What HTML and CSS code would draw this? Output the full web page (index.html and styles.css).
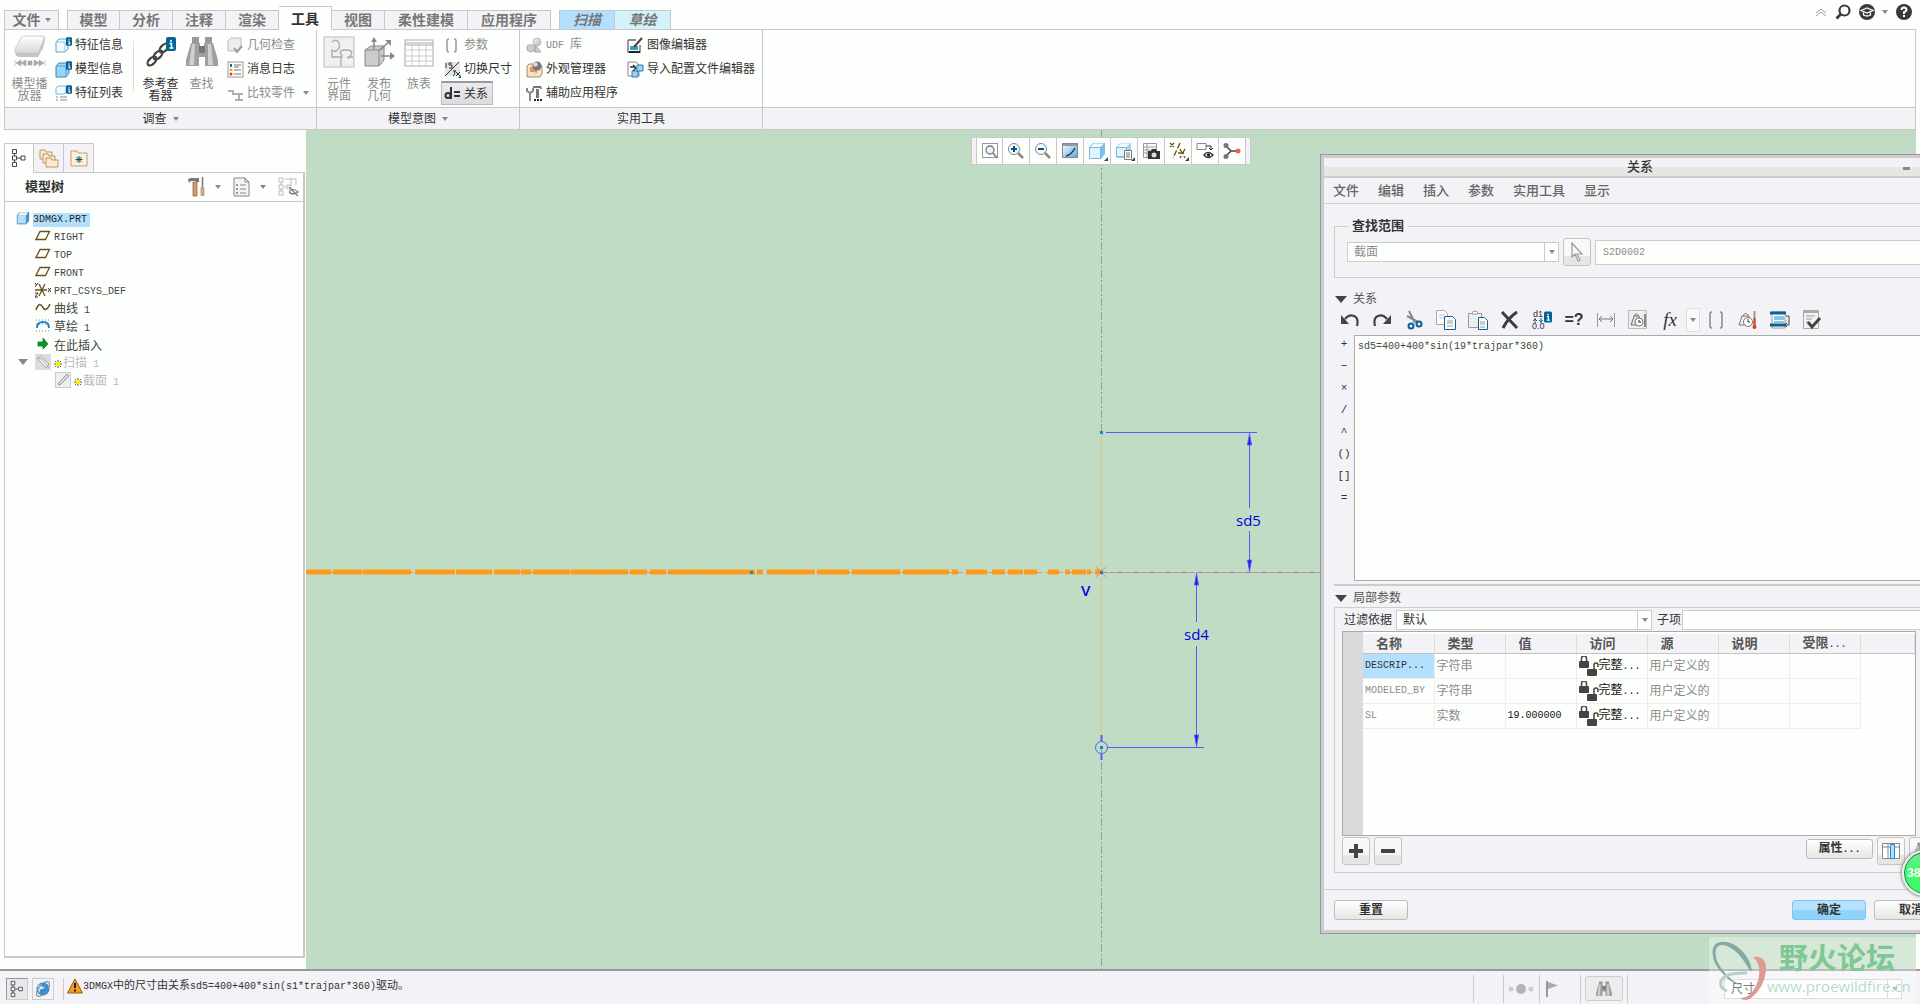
FILE: index.html
```
<!DOCTYPE html>
<html lang="zh-CN">
<head>
  <meta charset="UTF-8">
  <title>3DMGX - 关系</title>
  <link rel="stylesheet" href="styles.css">
</head>
<body>

  <!-- shared icons -->
  <svg class="defs" width="0" height="0" aria-hidden="true">
    <defs>
      <linearGradient id="gGrey" x1="0" y1="0" x2="1" y2="1"><stop offset="0" stop-color="#f8f8f8"/><stop offset="1" stop-color="#b4b4b4"/></linearGradient>
      <linearGradient id="gSlab" x1="0" y1="0" x2="0" y2="1"><stop offset="0" stop-color="#fff"/><stop offset="1" stop-color="#d8d8d8"/></linearGradient>
      <linearGradient id="gBlue" x1="0" y1="0" x2="1" y2="1"><stop offset="0" stop-color="#fff"/><stop offset="1" stop-color="#5aa5dc"/></linearGradient>
      <symbol id="info" viewBox="0 0 10 14"><rect width="10" height="14" rx="2" fill="#05629a"/><path d="M5 3v2M3.5 6.500H5.500V11M3.500 11h4" stroke="#fff" stroke-width="1.600" fill="none"/></symbol>
      <symbol id="lock" viewBox="0 0 20 20">
        <rect x="0" y="5" width="10" height="7" rx="1" fill="#444"/><path d="M2.500 5V2.500a2.500 2.500 0 0 1 5 0V5" fill="none" stroke="#444" stroke-width="1.500"/>
        <rect x="8" y="13" width="10" height="7" rx="1" fill="#444"/><path d="M15 13V9a2 2 0 0 1 4 0v2" fill="none" stroke="#444" stroke-width="1.500"/>
      </symbol>
      <symbol id="star" viewBox="0 0 8 8"><path d="M4 0v8M0 4h8M1 1l6 6M7 1L1 7" stroke="#555" stroke-width="1"/><rect x="2" y="2" width="4" height="4" fill="#fff200"/></symbol>
      <symbol id="plane" viewBox="0 0 16 12"><path d="M5 1.500h9.500L10.500 9.500H1z" fill="#fff" stroke="#6b4f1d" stroke-width="1.300"/></symbol>
      <symbol id="nodes" viewBox="0 0 16 20"><path d="M3.500 5v10M6 10h4" stroke="#444"/><path d="M1.500 1.500h4v4h-4zM1.500 8h4v4h-4zM1.500 14.500h4v4h-4zM10 8h4v4h-4z" fill="#fff" stroke="#444"/></symbol>
      <symbol id="binoc" viewBox="0 0 32 32">
        <path d="M6 1h7v6H6zM19 1h7v6h-7z" fill="#999"/><path d="M5 7h9v4h4V7h9l5 17v6H19v-9h-6v9H0v-6z" fill="#a0a0a0"/>
        <path d="M6 8h3l-1 21H3zM22 8h3l2 21h-5z" fill="#d0d0d0"/><rect x="13" y="10" width="6" height="7" fill="#777"/>
      </symbol>
      <symbol id="part" viewBox="0 0 16 16"><path d="M1 5l3-4h11v10l-3 4H1z" fill="#3c8fc6"/><path d="M1.500 5h10v9.500h-10z" fill="#b5dffb" stroke="#6ea9d0"/><path d="M2 5l2.500-3.500H14L11.500 5z" fill="#e8f6ff"/></symbol>
    </defs>
  </svg>

  <header class="ribbon">
    <div class="tab-row">
      <button class="tab file">文件<span class="caret"></span></button>
      <nav class="tabs">
        <button class="tab">模型</button>
        <button class="tab">分析</button>
        <button class="tab">注释</button>
        <button class="tab">渲染</button>
        <button class="tab active">工具</button>
        <button class="tab">视图</button>
        <button class="tab wide">柔性建模</button>
        <button class="tab wide">应用程序</button>
      </nav>
      <nav class="tabs context">
        <button class="tab sweep">扫描</button>
        <button class="tab sketch">草绘</button>
      </nav>
      <div class="top-icons">
        <button aria-label="最小化功能区"><svg width="12" height="10" viewBox="0 0 12 10"><path d="M1 6l5-4 5 4M1 9l5-4 5 4" fill="none" stroke="#999"/></svg></button>
        <button aria-label="搜索"><svg width="16" height="16" viewBox="0 0 16 16"><circle cx="9.500" cy="6.500" r="5" fill="none" stroke="#3a3a3a" stroke-width="2.200"/><path d="M6 10L1.500 14.500" stroke="#3a3a3a" stroke-width="2.800"/></svg></button>
        <button aria-label="学习"><svg width="16" height="16" viewBox="0 0 16 16"><circle cx="8" cy="8" r="8" fill="#3a3a3a"/><path d="M2 6.500L8 4l6 2.500L8 9zM4.500 8.500v2.500q3.500 2 7 0V8.500" fill="none" stroke="#fff" stroke-width="1.300"/></svg><span class="caret"></span></button>
        <button aria-label="帮助"><svg width="16" height="16" viewBox="0 0 16 16"><circle cx="8" cy="8" r="8" fill="#3a3a3a"/><path d="M5.500 6q0-2.500 2.500-2.500T10.500 6Q10.500 7.200 8 8.200V10" fill="none" stroke="#fff" stroke-width="2"/><rect x="7" y="11" width="2" height="2" fill="#fff"/></svg></button>
      </div>
    </div>

    <div class="groups">
      <section class="group g-study">
        <div class="group-body">
          <button class="big off">
            <svg width="32" height="34" viewBox="0 0 32 34"><path d="M1 17L8 3q1-2 3-2h17q4 0 3 4l-2 8-5 9H5q-4-1-4-5z" fill="#c4c4c4"/><path d="M1 14L7 3q1-2 3-2h18q3 0 2 3l-5 12q-1 2-3 2H3q-3-1-2-4z" fill="url(#gSlab)" stroke="#ccc"/><path d="M1 25v6M7 25l-5 3 5 3zM12 25l-5 3 5 3zM14 26h4v4h-4zM20 25l5 3-5 3zM25 25l5 3-5 3zM31 25v6" fill="#aaa" stroke="#aaa" stroke-width=".6"/></svg>
            模型播<br>放器
          </button>
          <div class="stack">
            <button><svg width="17" height="17" viewBox="0 0 17 17"><path d="M1 5l3-3h9v10l-3 3H1z" fill="#f4fbff" stroke="#5ca4cf"/><path d="M1 5h9v10" fill="none" stroke="#8cc4e6"/><use href="#info" x="11" y="0" width="6" height="9"/></svg>特征信息</button>
            <button><svg width="17" height="17" viewBox="0 0 17 17"><path d="M1 5l3-3h10v10l-3 4H1z" fill="#9ad4f7" stroke="#3c86b5"/><path d="M1 5h10v11" fill="none" stroke="#5ca4cf"/><use href="#info" x="11" y="0" width="6" height="9"/></svg>模型信息</button>
            <button><svg width="17" height="17" viewBox="0 0 17 17"><path d="M1 3l2-2h8v6l-2 2H1z" fill="#f4fbff" stroke="#7ab8de"/><path d="M1 12h2M5 12h7M1 15h2M5 15h7" stroke="#888"/><use href="#info" x="11" y="0" width="6" height="9"/></svg>特征列表</button>
          </div>
          <span class="divider"></span>
          <button class="big">
            <svg width="32" height="34" viewBox="0 0 32 34"><g fill="none" stroke="#444" stroke-width="2.200"><ellipse cx="7" cy="26" rx="5.500" ry="3" transform="rotate(-45 7 26)"/><ellipse cx="13" cy="20" rx="5.500" ry="3" transform="rotate(-45 13 20)"/><ellipse cx="19" cy="13" rx="5.500" ry="3" transform="rotate(-45 19 13)"/></g><use href="#info" x="21" y="2" width="10" height="14"/></svg>
            参考查<br>看器
          </button>
          <button class="big off">
            <svg width="32" height="34" viewBox="0 0 32 34"><use href="#binoc" y="1" width="32" height="32"/></svg>
            查找
          </button>
          <div class="stack">
            <button class="off"><svg width="17" height="17" viewBox="0 0 17 17"><path d="M1 4l3-3h10v9l-3 4H1z" fill="#eee" stroke="#bbb"/><path d="M7 11l3 4 5-6" fill="none" stroke="#999" stroke-width="2"/></svg>几何检查</button>
            <button><svg width="17" height="17" viewBox="0 0 17 17"><rect x="1" y="1" width="15" height="15" fill="#fff" stroke="#999"/><path d="M7 4h7M7 6h5M7 9h7M7 13h7" stroke="#777"/><rect x="3" y="3" width="2" height="3" fill="#246ba8"/><path d="M2 10l2-3 2 3z" fill="#e8a400"/><circle cx="4" cy="13" r="1.500" fill="#d33"/></svg>消息日志</button>
            <button class="off"><svg width="17" height="17" viewBox="0 0 17 17"><path d="M1 6h5v3h4M7 9h9M12 9v5M8 15h8" fill="none" stroke="#b0b0b0" stroke-width="2"/></svg>比较零件<span class="caret"></span></button>
          </div>
        </div>
        <footer class="group-label">调查<span class="caret"></span></footer>
      </section>

      <section class="group g-intent">
        <div class="group-body">
          <button class="big off">
            <svg width="32" height="34" viewBox="0 0 32 34"><rect x="1" y="2" width="30" height="30" fill="#f0f0f2" stroke="#bbb"/><path d="M9 7q5-4 7 1t-3 8q-4 1-4-2M9 14v8h8q4 1 1-3t5-4 5 5-3 2h5M18 22v9" fill="none" stroke="#aaa" stroke-width="1.300"/></svg>
            元件<br>界面
          </button>
          <button class="big off">
            <svg width="32" height="34" viewBox="0 0 32 34"><path d="M2 15l6-4h13v14l-5 6H2z" fill="#ccc" stroke="#888"/><path d="M2 15h14v16M16 15l5-4" fill="none" stroke="#888"/><path d="M11 14V4M17 15L27 6M18 21h11" stroke="#888" stroke-width="1.500"/><path d="M8 7l3-5 3 5zM22 5h6v6zM27 17l5 4-5 4z" fill="#888"/></svg>
            发布<br>几何
          </button>
          <button class="big off">
            <svg width="32" height="34" viewBox="0 0 32 34"><rect x="2" y="5" width="28" height="26" fill="#fff" stroke="#aaa"/><path d="M2 10h28M2 8h28" stroke="#aaa"/><path d="M2 15h28M2 21h28M2 26h28M9 8v23M16 8v23M23 8v23" stroke="#ccc"/></svg>
            族表
          </button>
          <div class="stack">
            <button class="off"><svg width="17" height="17" viewBox="0 0 17 17"><path d="M5 2Q3 2 3 4v9q0 2 2 2M10 2q2 0 2 2v9q0 2-2 2" fill="none" stroke="#999" stroke-width="1.500"/></svg>参数</button>
            <button><svg width="17" height="17" viewBox="0 0 17 17"><rect x="1" y="1" width="15" height="14" fill="#e4e4e4"/><path d="M2 2v5M8 2H5v2h3v3H5M1 15L15 1M9 15q2 0 2-6M9 10h3M12 11l4 4M16 11l-4 4" stroke="#333" fill="none"/><path d="M17 14v3h-3z" fill="#05629a"/></svg>切换尺寸</button>
            <button class="pressed"><svg width="17" height="17" viewBox="0 0 17 17"><path d="M7 2v12M10 7h6M10 11h6" stroke="#333" stroke-width="2"/><circle cx="4" cy="10.500" r="2.500" fill="none" stroke="#333" stroke-width="2"/></svg>关系</button>
          </div>
        </div>
        <footer class="group-label">模型意图<span class="caret"></span></footer>
      </section>

      <section class="group g-utils">
        <div class="group-body">
          <div class="stack">
            <button class="off"><svg width="17" height="17" viewBox="0 0 17 17"><circle cx="11" cy="5" r="4" fill="url(#gGrey)" stroke="#bbb"/><path d="M1 10q0-2 2-2h6v5l-5 2-3-2zM10 9l5 6H8z" fill="#ccc" stroke="#aaa"/></svg><span><span class="mono">UDF </span>库</span></button>
            <button><svg width="17" height="17" viewBox="0 0 17 17"><path d="M1 5l2-2h4l1 2h8v8l-2 3H1z" fill="#f3e3c8" stroke="#a87"/><path d="M4 6h7v6l-3-1H4z" fill="#ee8f5f"/><circle cx="11" cy="5" r="4.500" fill="#777"/><circle cx="9.500" cy="3.500" r="2.200" fill="#ddd"/></svg>外观管理器</button>
            <button><svg width="17" height="17" viewBox="0 0 17 17"><path d="M1 3v3l3 2 3-2V3M4 8v8" fill="none" stroke="#888" stroke-width="2"/><path d="M7 1h8l1 3h-2V3H7zM10 4h3v9h-3z" fill="#777"/><path d="M8 15h2M11 15h2M14 15h2" stroke="#222" stroke-width="2"/></svg>辅助应用程序</button>
          </div>
          <div class="stack">
            <button><svg width="17" height="17" viewBox="0 0 17 17"><path d="M1 3h8M1 3v12h12V8" fill="#fff" stroke="#666" stroke-width="1.300"/><path d="M3 9h8v4H3z" fill="#37a0c4"/><path d="M15 1L7 10" stroke="#444" stroke-width="2"/><path d="M2 15h11" stroke="#222" stroke-width="2"/></svg>图像编辑器</button>
            <button><svg width="17" height="17" viewBox="0 0 17 17"><path d="M1 1h8l3 3v11H1z" fill="#fff" stroke="#888"/><path d="M3 6h5M6 4l3 3-3 3" stroke="#333" fill="none" stroke-width="1.500"/><path d="M10 4h6v6h-6zM5 10h6v6H5z" fill="#9ad4f7" stroke="#2e7fb4"/></svg>导入配置文件编辑器</button>
          </div>
        </div>
        <footer class="group-label">实用工具</footer>
      </section>

      <section class="group g-rest">
        <div class="group-body"></div>
        <footer class="group-label"></footer>
      </section>
    </div>
  </header>

  <main class="workspace">
    <aside class="side">
      <div class="side-tabs">
        <button class="side-tab active" aria-label="模型树"><svg width="16" height="20"><use href="#nodes"/></svg></button>
        <button class="side-tab" aria-label="文件夹浏览器"><svg width="20" height="20" viewBox="0 0 20 20"><g fill="#fdeccb" stroke="#b9946a"><path d="M1 2h5l1 2h6v7H1z"/><path d="M4 6h5l1 2h6v7H4z"/><path d="M7 10h5l1 2h6v7H7z"/></g></svg></button>
        <button class="side-tab" aria-label="收藏夹"><svg width="18" height="17" viewBox="0 0 18 17"><path d="M1 1h6l1 2h9v13H1z" fill="#fdf0d4" stroke="#b9a07a"/><path d="M9 6v7M5.500 9.500h7M6.500 7l5 5M11.500 7l-5 5" stroke="#05507d"/></svg></button>
      </div>
      <div class="side-panel">
        <div class="side-head">
          <h2>模型树</h2>
          <button aria-label="设置"><svg width="18" height="20" viewBox="0 0 18 20"><path d="M0 2l3-1h8v4H8V4H3L1 6z" fill="#777"/><path d="M5 5h4v14H5z" fill="#d99a73" stroke="#8a5a3b" stroke-width=".7"/><path d="M14.500 0v10" stroke="#777" stroke-width="1.500"/><rect x="12.500" y="10" width="4" height="9" rx="1" fill="#c9a77a"/></svg><span class="caret"></span></button>
          <button aria-label="显示"><svg width="18" height="20" viewBox="0 0 18 20"><path d="M1 1h11l4 4v14H1z" fill="#f4f4f4" stroke="#888"/><path d="M12 1v4h4M7 8h6M7 12h6M7 16h6" fill="none" stroke="#888"/><path d="M3 7h2v2H3zM3 11h2v2H3zM3 15h2v2H3z" fill="#999"/></svg><span class="caret"></span></button>
          <button aria-label="过滤"><svg width="21" height="20" viewBox="0 0 21 20"><g fill="#fff" stroke="#bbb"><path d="M3 5v10M6 10h4M7 2h11v6M13 2v6"/><path d="M1 1h4v4H1zM1 8h4v4H1zM1 14h4v4H1zM9 8h4v4H9z"/></g><path d="M11 15q4-5 9 0-5 4-9 0M11 10l9 9" fill="none" stroke="#777" stroke-width="1.200"/></svg></button>
        </div>
        <ul class="tree">
          <li class="root"><svg width="14" height="14"><use href="#part"/></svg><span class="mono picked">3DMGX.PRT</span></li>
          <li><svg width="16" height="12"><use href="#plane"/></svg><span class="mono">RIGHT</span></li>
          <li><svg width="16" height="12"><use href="#plane"/></svg><span class="mono">TOP</span></li>
          <li><svg width="16" height="12"><use href="#plane"/></svg><span class="mono">FRONT</span></li>
          <li><svg width="16" height="16" viewBox="0 0 16 16"><path d="M0 8h12M4 2l6 12M10 2L4 14" stroke="#6b4f1d" stroke-width="1.300"/><path d="M0 1l1.500 2L3 1M1.500 3L0 5M0 11h3l-3 4h3M13 6l3 4M16 6l-3 4" fill="none" stroke="#333"/></svg><span class="mono">PRT_CSYS_DEF</span></li>
          <li><svg width="16" height="12" viewBox="0 0 16 12"><path d="M1 8Q4-1 7.500 5T15 2" fill="none" stroke="#6b4f1d" stroke-width="1.500"/></svg><span>曲线<span class="mono"> 1</span></span></li>
          <li><svg width="16" height="14" viewBox="0 0 16 14"><path d="M1 1h14M1 5h14M1 12h14" stroke="#888" stroke-dasharray="1 2"/><path d="M2 9q0-6 6-6t6 6" fill="none" stroke="#1b86d1" stroke-width="2"/></svg><span>草绘<span class="mono"> 1</span></span></li>
          <li><svg width="16" height="14" viewBox="0 0 16 14"><path d="M3 5h5V1l5 6-5 5V9H3z" fill="#0c9a0c" stroke="#064" stroke-width=".7"/></svg>在此插入</li>
          <li class="off open"><span class="twist"></span><svg width="16" height="16" viewBox="0 0 16 16"><rect width="16" height="16" fill="#dcdcdc"/><path d="M2 4l4-2 8 8-3 4zM2 4l5 1 7 9" fill="#eee" stroke="#aaa"/></svg><svg class="mark" width="8" height="8"><use href="#star"/></svg><span>扫描<span class="mono"> 1</span></span></li>
          <li class="off leaf"><svg width="16" height="16" viewBox="0 0 16 16"><rect x=".5" y=".5" width="15" height="15" fill="#eee" stroke="#ccc"/><path d="M3 12L12 2l2 2-9 9z" fill="#ddd" stroke="#999"/></svg><svg class="mark" width="8" height="8"><use href="#star"/></svg><span>截面<span class="mono"> 1</span></span></li>
        </ul>
      </div>
    </aside>

    <div class="canvas">
      <svg class="drawing" width="100%" height="100%">
        <g transform="translate(-306 -130)">
          <path d="M1101.500 130V433M1101.500 748V969" stroke="#a89a9c" stroke-dasharray="8 2 2 2" fill="none"/>
          <path d="M1101.500 433V740" stroke="#e8c27c" stroke-width="1"/>
          <path d="M306 572H331M333 572H362M363 572H411M415 572H455M456 572H492M494 572H520M521 572H531M533 572H570M571 572H628M630 572H647M650 572H666M668 572H755M757 572H763M767 572H815M817 572H849M852 572H900M903 572H949M952 572H958M966 572H987M992 572H1005M1008 572H1023M1024 572H1037M1048 572H1059M1065 572H1070M1072 572H1086M1087 572H1091M1095 572H1103" stroke="#ffa00a" stroke-width="5"/>
          <path d="M306 572.500H1101" stroke="#f5857c" stroke-dasharray="7 3"/>
          <path d="M1101 572.500H1916" stroke="#e09a9f"/>
          <path d="M1101 572.500H1916" stroke="#8c87b0" stroke-dasharray="6 4 2 4"/>
          <path d="M1096 567l10 10M1106 567l-10 10" stroke="#ee8585"/>
          <path d="M1100 571h3v3h-3zM1100 431h3v3h-3zM750 571h3v3h-3z" fill="#1685d2"/>
          <g stroke="#5a5af5" stroke-width="1" fill="none">
            <path d="M1106 432.500H1257M1249.500 433V508M1249.500 531V572M1107 747.500H1204M1196.500 573V622M1196.500 646V747"/>
            <path d="M1249.500 434l-2 11h4zM1249.500 571l-2-11h4zM1196.500 574l-2 11h4zM1196.500 746l-2-11h4z" fill="#1a1ae0"/>
            <circle cx="1101.500" cy="747.500" r="6"/><path d="M1101.500 735v6M1101.500 754v6" stroke-width="2"/>
          </g>
          <rect x="1100" y="746" width="3" height="3" fill="#1685d2"/>
          <text class="dim" x="1236" y="526">sd5</text>
          <text class="dim" x="1184" y="640">sd4</text>
          <text class="dim axis" x="1081" y="596">V</text>
        </g>
      </svg>
      <div class="view-bar">
        <button aria-label="重新调整"><svg width="18" height="18" viewBox="0 0 18 18"><rect x="1.500" y="1.500" width="15" height="14" fill="#fff" stroke="#999"/><circle cx="9" cy="8" r="4" fill="#e4f3fc" stroke="#777" stroke-width="1.300"/><path d="M12 11l4 5" stroke="#888" stroke-width="2"/></svg></button>
        <button aria-label="放大"><svg width="18" height="18" viewBox="0 0 18 18"><circle cx="7" cy="7" r="5.500" fill="#f4fbff" stroke="#888"/><path d="M11 11l5 5" stroke="#888" stroke-width="2.500"/><path d="M4 7h6M7 4v6" stroke="#05508a" stroke-width="2"/></svg></button>
        <button aria-label="缩小"><svg width="18" height="18" viewBox="0 0 18 18"><circle cx="7" cy="7" r="5.500" fill="#f4fbff" stroke="#888"/><path d="M11 11l5 5" stroke="#888" stroke-width="2.500"/><path d="M4 7h6" stroke="#05508a" stroke-width="2"/></svg></button>
        <button aria-label="重画"><svg width="18" height="18" viewBox="0 0 18 18"><rect x="1.500" y="1.500" width="15" height="14" fill="url(#gBlue)" stroke="#888"/><path d="M2 3h14" stroke="#999" stroke-width="2"/><path d="M5 14q5-1 9-8" fill="none" stroke="#05405f" stroke-width="1.500"/></svg></button>
        <button class="more" aria-label="显示样式"><svg width="18" height="18" viewBox="0 0 18 18"><path d="M1 5l4-4h12v11l-4 5H1z" fill="#7cc0ec"/><path d="M1.500 5.500h11v11h-11z" fill="#e0f4ff" stroke="#7ab8de"/><path d="M2 5l4-3.500h10L12.500 5z" fill="#f0faff"/></svg></button>
        <button class="more" aria-label="已保存方向"><svg width="18" height="18" viewBox="0 0 18 18"><path d="M1 5l4-4h11v10l-4 5H1z" fill="#9ed2f2"/><path d="M1.500 5.500h10v9h-10z" fill="#e0f4ff" stroke="#7ab8de"/><path d="M2 5l4-3.500h9L11.500 5z" fill="#f0faff"/><path d="M9.500 8.500h7v9h-7z" fill="#fff" stroke="#777"/><path d="M11 11h4M11 13h4M11 15h4" stroke="#777"/></svg></button>
        <button aria-label="视图管理器"><svg width="18" height="18" viewBox="0 0 18 18"><path d="M1.500 1.500h13v14h-13zM1 5h13M1 8h13M1 11h13M5 1v14" fill="#fff" stroke="#999"/><path d="M6 9h3l1-2h4l1 2h3v8H6z" fill="#333"/><circle cx="12" cy="13" r="2.500" fill="#ddd"/></svg></button>
        <button class="more" aria-label="基准显示"><svg width="18" height="18" viewBox="0 0 18 18"><path d="M1 1l4 4M5 1L1 5M11 1L4 16M9 11h8M11 7l5 9M16 7l-5 9" stroke="#6b5512" stroke-width="1.400" stroke-dasharray="6 2"/></svg></button>
        <button aria-label="注释显示"><svg width="18" height="18" viewBox="0 0 18 18"><path d="M1 1.500h9v6H1z" fill="#fdfdf4" stroke="#888"/><path d="M10 4h5v4M13 6l2 2 2-2" fill="none" stroke="#333"/><path d="M8 13q4-5 9 0-5 5-9 0z" fill="#fff" stroke="#333" stroke-width="1.500"/><circle cx="12.500" cy="13" r="1.500"/></svg></button>
        <button aria-label="旋转中心"><svg width="18" height="18" viewBox="0 0 18 18"><path d="M3 4l5 5-5 5M8 9h7" fill="none" stroke="#444" stroke-width="1.500"/><circle cx="3" cy="3.500" r="2.500" fill="#777"/><circle cx="3" cy="14.500" r="2.500" fill="#777"/><circle cx="15" cy="9" r="2.500" fill="#f15b5b"/></svg></button>
      </div>
    </div>
  </main>

  <footer class="status">
    <button class="tool pressed" aria-label="导航器"><svg width="16" height="18"><use href="#nodes"/></svg></button>
    <button class="tool" aria-label="浏览器"><svg width="18" height="18" viewBox="0 0 18 18"><circle cx="9" cy="9" r="6.500" fill="#2f8fdc"/><path d="M4 6q3-3 4 0t3 0q0 3-3 3t-2 4q-3-3-2-7z" fill="#d4ecff"/><ellipse cx="9" cy="9" rx="9" ry="4" transform="rotate(-50 9 9)" fill="none" stroke="#888" stroke-width="1.200"/></svg></button>
    <span class="rule"></span>
    <p class="message"><svg width="16" height="16" viewBox="0 0 16 16"><path d="M8 1l7.500 14H.5z" fill="#f59b1d" stroke="#9a5b08"/><path d="M8 5v5M8 11.500v2" stroke="#222" stroke-width="2"/></svg><span><span class="mono">3DMGX</span>中的尺寸由关系<span class="mono">sd5=400+400*sin(s1*trajpar*360)</span>驱动。</span></p>
    <div class="status-right">
      <span class="cell c1"></span>
      <span class="cell c2"><svg width="26" height="12" viewBox="0 0 26 12"><circle cx="3" cy="6" r="2.500" fill="#ccc"/><circle cx="13" cy="6" r="5" fill="#b4b4b4"/><circle cx="23" cy="6" r="2.500" fill="#ccc"/></svg></span>
      <span class="cell c3"><svg width="12" height="16" viewBox="0 0 12 16"><path d="M1 0v16" stroke="#999" stroke-width="2"/><path d="M2 1l10 3.500L2 8z" fill="#aaa"/></svg></span>
      <span class="cell c4"><button class="find" aria-label="查找"><svg width="16" height="16"><use href="#binoc"/></svg></button></span>
      <label class="select filter-pick"><select aria-label="选择过滤器"><option>尺寸</option></select><span class="arrow"></span></label>
    </div>
  </footer>

  <section class="dialog" role="dialog" aria-labelledby="dlg-title">
    <div class="inner">
      <div class="title-bar"><h1 id="dlg-title">关系</h1><button class="min" aria-label="最小化"></button></div>
      <nav class="menu">
        <button>文件</button><button>编辑</button><button>插入</button><button>参数</button><button>实用工具</button><button>显示</button>
      </nav>
      <div class="dlg-body">
        <fieldset class="scope">
          <legend>查找范围</legend>
          <div class="scope-row">
            <label class="select scope-pick"><select aria-label="对象类型" disabled><option>截面</option></select><span class="arrow"></span></label>
            <button class="square" aria-label="选取" disabled><svg width="14" height="20" viewBox="0 0 14 20"><path d="M2 1v14l3-3 3 7 2-1-3-6h5z" fill="#f6f6f6" stroke="#999" stroke-width="1.200"/></svg></button>
            <input class="mono" aria-label="对象名称" value="S2D0002" disabled>
          </div>
        </fieldset>

        <button class="fold"><span class="twist"></span>关系</button>
        <div class="tools">
          <button aria-label="撤消"><svg width="20" height="20" viewBox="0 0 20 20"><path d="M5 9q4-5 9-3t3 10" fill="none" stroke="#444" stroke-width="2.200"/><path d="M1 5v9h8z" fill="#444"/></svg></button>
          <button aria-label="重做"><svg width="20" height="20" viewBox="0 0 20 20"><path d="M15 9q-4-5-9-3T3 16" fill="none" stroke="#444" stroke-width="2.200"/><path d="M19 5v9h-8z" fill="#444"/></svg></button>
          <button aria-label="剪切"><svg width="20" height="20" viewBox="0 0 20 20"><path d="M5 1l6 12M3 6l11 6" stroke="#888" stroke-width="2"/><circle cx="7" cy="16" r="2.500" fill="none" stroke="#05629a" stroke-width="2"/><circle cx="15" cy="14" r="2.500" fill="none" stroke="#05629a" stroke-width="2"/></svg></button>
          <button aria-label="复制"><svg width="20" height="20" viewBox="0 0 20 20"><path d="M.5.500h8l3 3v11H.500z" fill="#fff" stroke="#aaa"/><path d="M3 5h6M3 8h6" stroke="#bbb"/><path d="M8.500 6.500h8l3 3v10h-11z" fill="#fff" stroke="#05629a"/><path d="M11 11h6M11 13h6M11 16h6" stroke="#999"/></svg></button>
          <button aria-label="粘贴"><svg width="20" height="20" viewBox="0 0 20 20"><path d="M.5 3.500h13v14H.500z" fill="#eee" stroke="#999"/><path d="M4 4q0-3 3-3t3 3z" fill="#fff" stroke="#999"/><path d="M10.500 7.500h6l3 3v9h-9z" fill="#fff" stroke="#05629a"/><path d="M12 12h5M12 14h5M12 17h5" stroke="#999"/></svg></button>
          <button aria-label="删除"><svg width="20" height="20" viewBox="0 0 20 20"><path d="M2 2l15 16M17 2Q8 8 3 18" stroke="#3c3c3c" stroke-width="3" fill="none"/></svg></button>
          <button aria-label="切换尺寸显示"><span class="dim-icon"><span>d1</span><svg width="8" height="12"><use href="#info" width="8" height="12"/></svg><svg width="12" height="5" viewBox="0 0 12 5"><path d="M3 0v5M1 3l2-2 2 2M9 0v5M7 2l2 2 2-2" fill="none" stroke="#05629a"/></svg><span>0.0</span></span></button>
          <button aria-label="求值"><span class="glyph">=?</span></button>
          <button aria-label="尺寸"><svg width="20" height="20" viewBox="0 0 20 20"><path d="M1.500 3v14M18.500 3v14" stroke="#999"/><path d="M3 9h14M6 6L3 9l3 3M14 6l3 3-3 3" fill="none" stroke="#777"/></svg></button>
          <button aria-label="单位"><svg width="20" height="20" viewBox="0 0 20 20"><path d="M.5.500h18v18H.500z" fill="#eee" stroke="#bbb"/><path d="M3 15L6 6h5l2 9zM6 6q2-4 5 0" fill="#ddd" stroke="#777"/><circle cx="11" cy="12" r="4" fill="#fff" stroke="#777"/><path d="M11 10v2h2M17 4v13" fill="none" stroke="#666" stroke-width="1.500"/></svg></button>
          <button aria-label="函数"><span class="glyph fx">fx</span></button>
          <button class="drop" aria-label="函数列表"><span class="caret"></span></button>
          <button aria-label="参数"><svg width="20" height="20" viewBox="0 0 20 20"><path d="M6 2Q4 2 4 4v12q0 2 2 2M14 2q2 0 2 2v12q0 2-2 2" fill="none" stroke="#888" stroke-width="1.500"/></svg></button>
          <button aria-label="单位检查"><svg width="20" height="20" viewBox="0 0 20 20"><path d="M1 15L4 6h7l2 9zM5 6q2-5 6 0" fill="#eee" stroke="#777"/><circle cx="10" cy="12" r="4.500" fill="#fff" stroke="#777"/><path d="M10 9v3h2" fill="none" stroke="#333"/><path d="M16.500 1v15" stroke="#999" stroke-width="2"/><path d="M16.500 8v9" stroke="#d9411e" stroke-width="2"/><circle cx="16.500" cy="17" r="2" fill="#d9411e"/></svg></button>
          <button aria-label="排序"><svg width="20" height="20" viewBox="0 0 20 20"><path d="M2 2h13v16H2z" fill="#fff" stroke="#999"/><path d="M0 3h16M0 15h16" stroke="#05629a" stroke-width="3"/><path d="M4 7h10M4 9h10M4 12h10" stroke="#1b86d1"/><path d="M16 6h3v9h-3M17 13l-2 2 2 2" fill="none" stroke="#444"/></svg></button>
          <button aria-label="校验"><svg width="20" height="20" viewBox="0 0 20 20"><path d="M1.500.500h15v18h-15z" fill="#f2f2f2" stroke="#aaa"/><path d="M2 2h14" stroke="#aaa" stroke-width="2"/><path d="M4 6h9M4 9h6M4 12h3" stroke="#999"/><path d="M6 12l4 5 8-9" fill="none" stroke="#444" stroke-width="3"/></svg></button>
        </div>
        <div class="editor">
          <div class="ops">
            <button>+</button><button>−</button><button>×</button><button>/</button><button>^</button><button>()</button><button>[]</button><button>=</button>
          </div>
          <textarea class="mono" aria-label="关系" spellcheck="false">sd5=400+400*sin(19*trajpar*360)</textarea>
        </div>

        <hr>
        <button class="fold params-fold"><span class="twist"></span>局部参数</button>
        <div class="params">
          <div class="filter-row">
            <label for="filter">过滤依据</label>
            <div class="select"><select id="filter"><option>默认</option></select><span class="arrow"></span></div>
            <label for="sub">子项</label>
            <input id="sub" type="text">
          </div>
          <div class="table-box">
            <table>
              <thead>
                <tr><th>名称</th><th>类型</th><th>值</th><th>访问</th><th>源</th><th>说明</th><th>受限<span class="mono">...</span></th><th class="fill"></th></tr>
              </thead>
              <tbody>
                <tr><td class="picked mono">DESCRIP...</td><td>字符串</td><td></td><td class="access"><svg width="20" height="20"><use href="#lock"/></svg>完整<span class="mono">...</span></td><td>用户定义的</td><td></td><td></td></tr>
                <tr><td class="mono">MODELED_BY</td><td>字符串</td><td></td><td class="access"><svg width="20" height="20"><use href="#lock"/></svg>完整<span class="mono">...</span></td><td>用户定义的</td><td></td><td></td></tr>
                <tr><td class="mono">SL</td><td>实数</td><td class="mono value">19.000000</td><td class="access"><svg width="20" height="20"><use href="#lock"/></svg>完整<span class="mono">...</span></td><td>用户定义的</td><td></td><td></td></tr>
              </tbody>
            </table>
          </div>
          <div class="param-actions">
            <button class="square" aria-label="添加"><svg width="14" height="14" viewBox="0 0 14 14"><path d="M7 0v14M0 7h14" stroke="#444" stroke-width="4"/></svg></button>
            <button class="square" aria-label="删除参数"><svg width="14" height="14" viewBox="0 0 14 14"><path d="M0 7h14" stroke="#444" stroke-width="4"/></svg></button>
            <button class="push props">属性<span class="mono">...</span></button>
            <button class="square" aria-label="列"><svg width="18" height="16" viewBox="0 0 18 16"><path d="M.5.500h17v15H.500zM0 4h18M6 0v16M12 0v16" fill="#fff" stroke="#888"/><path d="M8.500 1.500h4v14h-4z" fill="#b5dffb" stroke="#1b86d1"/></svg></button>
            <button class="square" aria-label="查找参数"><svg width="18" height="18"><use href="#binoc"/></svg></button>
          </div>
        </div>
      </div>
      <div class="dlg-foot">
        <button class="push">重置</button>
        <button class="push primary">确定</button>
        <button class="push">取消</button>
      </div>
    </div>
  </section>

  <div class="ball">38</div>

  <div class="watermark">
    <svg width="62" height="64" viewBox="0 0 62 64"><path d="M43 32Q40 14 24 5 8-1 4 9q-3 14 12 28 8 8 15 9-16-9-23-24Q3 6 14 6q14 2 27 26z" fill="#86aaa2"/><path d="M44 18q14-2 13 14-2 17-15 27-6 4-11 0 9 1 16-12 8-19-3-29z" fill="#dc9a92"/><path d="M38 34q-22-1-26 8-2 7 6 10" fill="none" stroke="#b7d0cc" stroke-width="3"/></svg>
    <div class="mark-text"><strong>野火论坛</strong><span>www.proewildfire.cn</span></div>
  </div>

</body>
</html>
```
FILE: styles.css
```
:root {
  --line: #c8c8c8;
  --panel: #f3f2f6;
  --paper: #fdfffc;
  --ink: #333;
  --muted: #8c8c8c;
  --pick: #b3e0ff;
  --green: #c1dcc4;
}

* {
  box-sizing: border-box;
}

body {
  margin: 0;
  height: 100vh;
  display: flex;
  flex-direction: column;
  position: relative;
  overflow: hidden;
  background: var(--paper);
  color: var(--ink);
  font-family: "Liberation Sans", "Noto Sans CJK SC", sans-serif;
  font-size: 12px;
  line-height: 18px;
}

button, input, select, textarea {
  font: inherit;
  color: inherit;
  margin: 0;
  padding: 0;
  border: 0;
  background: none;
  border-radius: 0;
}

svg {
  flex: none;
}

.defs {
  position: absolute;
}

.mono {
  font-family: "Liberation Mono", "Noto Sans CJK SC", monospace;
  font-size: 10px;
  white-space: pre;
}

.caret {
  flex: none;
  border: 3px solid transparent;
  border-top: 4px solid #888;
  border-bottom: 0;
}

.twist {
  border: 6px solid transparent;
  border-top: 7px solid #444;
  border-bottom: 0;
}

/* ribbon */
.tab-row {
  display: flex;
  align-items: flex-end;
  height: 30px;
  padding-left: 4px;
  position: relative;
}

.tabs {
  display: flex;
  align-items: flex-end;
  margin-left: 8px;
}

.tab {
  height: 20px;
  width: 53px;
  border: 1px solid var(--line);
  border-left-width: 0;
  background: var(--panel);
  color: #777;
  font-size: 14px;
  font-weight: bold;
  line-height: 18px;
}

.tab:first-child {
  border-left-width: 1px;
}

.tab.file {
  width: 55px;
  display: flex;
  align-items: center;
  justify-content: center;
  gap: 4px;
}

.tab.wide {
  width: 83px;
}

.tab.active {
  height: 24px;
  background: var(--paper);
  border-bottom-color: var(--paper);
  color: var(--ink);
  line-height: 24px;
}

.context .tab {
  width: 56px;
  font-style: italic;
}

.tab.sweep {
  background: var(--pick);
}

.tab.sketch {
  background: #d3f2fa;
}

.top-icons {
  margin-left: auto;
  align-self: flex-start;
  display: flex;
  gap: 8px;
  padding: 4px 8px 0 0;
}

.top-icons button {
  display: flex;
  align-items: center;
  gap: 7px;
}

.groups {
  display: flex;
  margin: -1px 4px 0;
  border: 1px solid var(--line);
}

.group {
  display: flex;
  flex-direction: column;
  border-right: 1px solid var(--line);
}

.g-study {
  width: 312px;
}

.g-intent {
  width: 203px;
}

.g-utils {
  width: 243px;
}

.g-rest {
  flex: 1;
  border-right: 0;
}

.group-body {
  display: flex;
  height: 77px;
  padding: 3px 0 0 4px;
}

.group-label {
  display: flex;
  align-items: center;
  justify-content: center;
  gap: 6px;
  height: 22px;
  border-top: 1px solid var(--line);
  background: var(--panel);
}

.big {
  width: 41px;
  display: flex;
  flex-direction: column;
  align-items: center;
  padding-top: 2px;
  line-height: 12px;
  white-space: nowrap;
}

.big svg {
  margin-bottom: 9px;
}

.stack {
  display: flex;
  flex-direction: column;
  padding-left: 2px;
}

.stack button {
  display: flex;
  align-items: center;
  gap: 3px;
  height: 24px;
  padding: 0 5px 0 3px;
  white-space: nowrap;
}

.stack .caret {
  margin-left: 5px;
}

.off, .group button.off {
  color: var(--muted);
}

.g-intent .group-body {
  padding-left: 2px;
}

.g-intent .big {
  width: 40px;
}

.g-utils .group-body {
  padding-left: 1px;
}

.g-utils .stack + .stack {
  padding-left: 1px;
}

.stack .pressed {
  align-self: flex-start;
  border: 1px solid #bbb;
  border-top: 2px solid #999;
  padding: 0 4px 0 2px;
  background: linear-gradient(#ececf0, #dcdce0);
}

.divider {
  width: 1px;
  height: 50px;
  margin: 8px 6px 0 5px;
  background: #ddd;
}

/* workspace */
.workspace {
  flex: 1;
  display: flex;
  min-height: 0;
}

.side {
  width: 306px;
  padding: 13px 1px 11px 4px;
  display: flex;
  flex-direction: column;
}

.side-tabs {
  display: flex;
}

.side-tab {
  width: 30px;
  height: 30px;
  display: flex;
  align-items: center;
  justify-content: center;
  border: 1px solid var(--line);
  border-left-width: 0;
  background: var(--panel);
}

.side-tab.active {
  position: relative;
  z-index: 1;
  border-left-width: 1px;
  border-bottom-color: var(--paper);
  background: var(--paper);
}

.side-panel {
  flex: 1;
  margin-top: -1px;
  border: solid var(--line);
  border-width: 1px 2px 2px 1px;
}

.side-head {
  display: flex;
  align-items: center;
  height: 29px;
  padding: 0 4px 0 20px;
  border-bottom: 1px solid var(--line);
}

.side-head h2 {
  margin: 0 auto 0 0;
  font-size: 13px;
}

.side-head button {
  display: flex;
  align-items: center;
  gap: 9px;
  margin-left: 12px;
}

.tree {
  list-style: none;
  margin: 0;
  padding: 9px 0 0;
}

.tree li {
  display: flex;
  align-items: center;
  gap: 3px;
  height: 18px;
  padding-left: 30px;
  color: #444;
}

.tree .root {
  padding-left: 11px;
}

.tree svg {
  margin-bottom: 4px;
}

.tree .picked {
  line-height: 14px;
  padding-right: 3px;
}

.tree .off {
  color: #bbb;
}

.tree .open {
  padding-left: 13px;
}

.tree .off .mark {
  margin: 0 -2px 0 0;
}

.tree .twist {
  border-width: 5px;
  border-top: 6px solid #888;
  border-bottom: 0;
  margin: 0 4px 4px 0;
}

.tree .leaf {
  padding-left: 50px;
}

.picked {
  background: var(--pick);
  color: #222;
}

.canvas {
  flex: 1;
  position: relative;
  display: flex;
  justify-content: center;
  align-items: flex-start;
  padding-top: 7px;
  margin-right: 4px;
  background: var(--green);
}

.drawing {
  position: absolute;
  inset: 0;
}

.dim {
  fill: #0000e0;
  font-family: "Open Sans", sans-serif;
  font-size: 15px;
}

.axis {
  font-weight: 600;
}

.view-bar {
  position: relative;
  display: flex;
  padding: 0 4px;
  border: 1px solid var(--line);
  background: var(--panel);
}

.view-bar button {
  position: relative;
  display: flex;
  align-items: center;
  justify-content: center;
  width: 27px;
  height: 26px;
  background: var(--paper);
  border-right: 1px solid var(--line);
}

.view-bar button:first-child {
  border-left: 1px solid var(--line);
}

.view-bar .more::after {
  content: "";
  position: absolute;
  right: 2px;
  bottom: 3px;
  border: 2px solid;
  border-color: transparent #444 #444 transparent;
}

/* status bar */
.status {
  display: flex;
  align-items: center;
  height: 35px;
  padding: 2px 18px 0 6px;
  border-top: 2px solid #999;
  background: var(--panel);
}

.status .tool {
  display: flex;
  align-items: center;
  justify-content: center;
  width: 22px;
  height: 22px;
  margin-right: 4px;
  border: 1px solid #ccc;
}

.status .tool.pressed {
  border-color: #999 #ccc #ccc #999;
  background: #e9e9ec;
}

.status .rule {
  width: 1px;
  height: 22px;
  margin: 0 3px 0 5px;
  background: #ccc;
}

.message {
  display: flex;
  align-items: center;
  margin: 0 auto 6px 0;
  font-size: 11px;
}

.status-right {
  display: flex;
  align-items: center;
}

.cell {
  display: flex;
  align-items: center;
  padding: 0 4px;
  height: 28px;
  border-left: 1px solid #ccc;
}

.c1 {
  width: 30px;
}

.c2 {
  width: 36px;
}

.c3 {
  width: 41px;
  padding-left: 6px;
}

.c4 {
  width: 48px;
  border-right: 1px solid #ccc;
}

.find {
  display: flex;
  align-items: center;
  justify-content: center;
  width: 40px;
  height: 25px;
  border: 1px solid #ccc;
  border-radius: 3px;
  background: #ececee;
}

.select {
  display: flex;
  height: 20px;
  border: 1px solid #ccc;
  background: var(--paper);
}

.select select {
  flex: 1;
  appearance: none;
  padding-left: 6px;
  line-height: 16px;
  opacity: 1;
}

.select .arrow {
  width: 14px;
  display: flex;
  align-items: center;
  justify-content: center;
  border-left: 1px solid #ccc;
}

.select .arrow::after {
  content: "";
  border: 3px solid transparent;
  border-top: 4px solid #888;
  border-bottom: 0;
}

.filter-pick {
  width: 178px;
  margin-left: 96px;
}

/* relations window */
.dialog {
  position: absolute;
  left: 1320px;
  top: 154px;
  width: 640px;
  padding: 3px;
  border: 1px solid #999;
  background: #cdcccc;
}

.inner {
  background: var(--panel);
}

.title-bar {
  position: relative;
  height: 20px;
  border-bottom: 2px solid #ccc;
  background: linear-gradient(var(--panel) 50%, #e6e6e4 50%);
  text-align: center;
}

.title-bar h1 {
  margin: 0;
  font-size: 13px;
  font-weight: 500;
  line-height: 18px;
}

.min {
  position: absolute;
  right: 46px;
  top: 9px;
  width: 7px;
  height: 3px;
  background: #888;
}

.menu {
  display: flex;
  gap: 19px;
  height: 26px;
  padding: 0 9px;
  border-bottom: 1px solid #d2d2c8;
}

.menu button {
  color: #666;
  font-size: 13px;
  font-weight: 500;
}

.dlg-body {
  padding: 13px 10px 0;
}

.scope {
  margin: 0 0 12px;
  padding: 3px 10px 11px 12px;
  border: 1px solid #cfcfc0;
}

.scope legend {
  margin-left: 1px;
  padding: 0 4px;
  font-size: 13px;
  font-weight: bold;
}

.scope-row {
  display: flex;
  align-items: center;
  gap: 4px;
  color: var(--muted);
}

.scope-pick {
  width: 212px;
}

.square {
  display: flex;
  align-items: center;
  justify-content: center;
  width: 28px;
  height: 28px;
  border: 1px solid #c4c4c4;
  border-radius: 3px;
  background: linear-gradient(#f8f8f9 65%, #e6e6e4 65%);
}

.scope-row input {
  flex: 1;
  height: 25px;
  padding-left: 7px;
  border: 1px solid #ccc;
  background: var(--paper);
}

.fold {
  display: flex;
  align-items: center;
  gap: 6px;
  height: 18px;
  padding-left: 1px;
  color: #555;
}

.tools {
  display: flex;
  align-items: flex-start;
  height: 27px;
}

.tools button {
  width: 32px;
  height: 24px;
  display: flex;
  align-items: center;
  justify-content: center;
}

.tools .drop {
  width: 14px;
  border: 1px solid #ddd;
  background: #fafafa;
}

.glyph {
  font: bold 16px "Liberation Sans", sans-serif;
}

.fx {
  font: italic 19px "Liberation Serif", serif;
}

.dim-icon {
  display: grid;
  grid-template-columns: 12px 8px;
  font-size: 9px;
  line-height: 7px;
}

.dim-icon svg:first-of-type {
  grid-row: span 2;
}

.editor {
  display: flex;
  height: 246px;
}

.ops {
  display: flex;
  flex-direction: column;
  width: 20px;
}

.ops button {
  height: 22px;
  line-height: 18px;
  padding-bottom: 4px;
  font-family: "Liberation Mono", monospace;
  font-size: 11px;
}

.editor textarea {
  flex: 1;
  padding: 3px;
  border: 1px solid #aaa;
  background: var(--paper);
  color: #444;
  line-height: 16px;
  resize: none;
}

.dlg-body hr {
  margin: 3px 0;
  border: 0;
  border-top: 2px solid #ccc;
}

.params {
  padding: 2px 8px 7px 7px;
  border: 1px solid #cfcfc0;
}

.filter-row {
  display: flex;
  align-items: center;
  height: 20px;
}

.filter-row label {
  padding: 0 2px;
  margin-right: 2px;
}

.filter-row .select {
  width: 256px;
  margin-right: 3px;
}

.filter-row label + input {
  flex: 1;
  height: 20px;
  margin-left: -3px;
  border: 1px solid #ccc;
  background: var(--paper);
}

.table-box {
  height: 205px;
  margin: 1px 21px 1px 0;
  border: 1px solid #aaa;
  padding-top: 2px;
  background: linear-gradient(90deg, #dadada 20px, var(--paper) 20px);
}

.table-box table {
  width: calc(100% - 20px);
  margin-left: 20px;
  table-layout: fixed;
  border-collapse: collapse;
}

.table-box th {
  width: 71px;
  height: 18px;
  padding: 1px 0 0 13px;
  border: 1px solid #ddd;
  border-width: 0 1px 1px 0;
  border-bottom-color: #c4c4bc;
  background: var(--panel);
  text-align: left;
  color: #555;
  font-size: 13px;
  line-height: 16px;
  white-space: nowrap;
}

.table-box th.fill {
  width: auto;
}

.table-box td {
  height: 25px;
  padding: 0 0 0 2px;
  border: 1px solid #eee;
  border-width: 0 1px 1px 0;
  color: var(--muted);
  line-height: 16px;
  white-space: nowrap;
  overflow: hidden;
}

.table-box td.picked {
  color: #333;
}

.table-box td.access, .table-box td.value {
  color: #111;
}

.access svg {
  vertical-align: middle;
}

.param-actions {
  display: flex;
  align-items: flex-start;
  gap: 4px;
}

.push {
  height: 20px;
  width: 74px;
  border: 1px solid #bbb;
  border-radius: 3px;
  background: linear-gradient(#fff, #f0f0f0 60%, #e6e6e4);
  color: #333;
  font-weight: bold;
  line-height: 16px;
}

.push.props {
  width: 67px;
  margin: 2px 0 0 auto;
}

.dlg-foot {
  display: flex;
  gap: 8px;
  margin-top: 16px;
  padding: 10px 8px 10px 10px;
  border-top: 1px solid #d2d2c8;
}

.primary {
  margin-left: auto;
  border-color: #7fc4f3;
  background: linear-gradient(#b5e1fd 50%, #8fd3fa 50%);
}

/* floating ball */
.ball {
  position: absolute;
  left: 1902px;
  top: 850px;
  width: 46px;
  height: 46px;
  padding-left: 3px;
  border: 2px solid #eee;
  border-radius: 50%;
  background: linear-gradient(#7fe39b, #3dfb6b 40%);
  box-shadow: 0 0 3px 1px #888, inset 0 0 0 1px #1d7a55;
  color: #fff;
  font-size: 12px;
  font-weight: bold;
  line-height: 42px;
}

/* forum mark */
.watermark {
  position: absolute;
  right: 4px;
  bottom: 0;
  width: 207px;
  height: 67px;
  display: flex;
  padding-top: 2px;
  background: rgba(255, 255, 255, 0.35);
  pointer-events: none;
}

.watermark svg {
  margin-right: -4px;
}

.mark-text {
  display: flex;
  flex-direction: column;
  color: #b5dccf;
  font-family: "Open Sans", "Noto Sans CJK SC", sans-serif;
  font-size: 15px;
  line-height: 18px;
}

.mark-text strong {
  margin-left: 12px;
  color: #7fc794;
  font-size: 29px;
  line-height: 38px;
}
```
